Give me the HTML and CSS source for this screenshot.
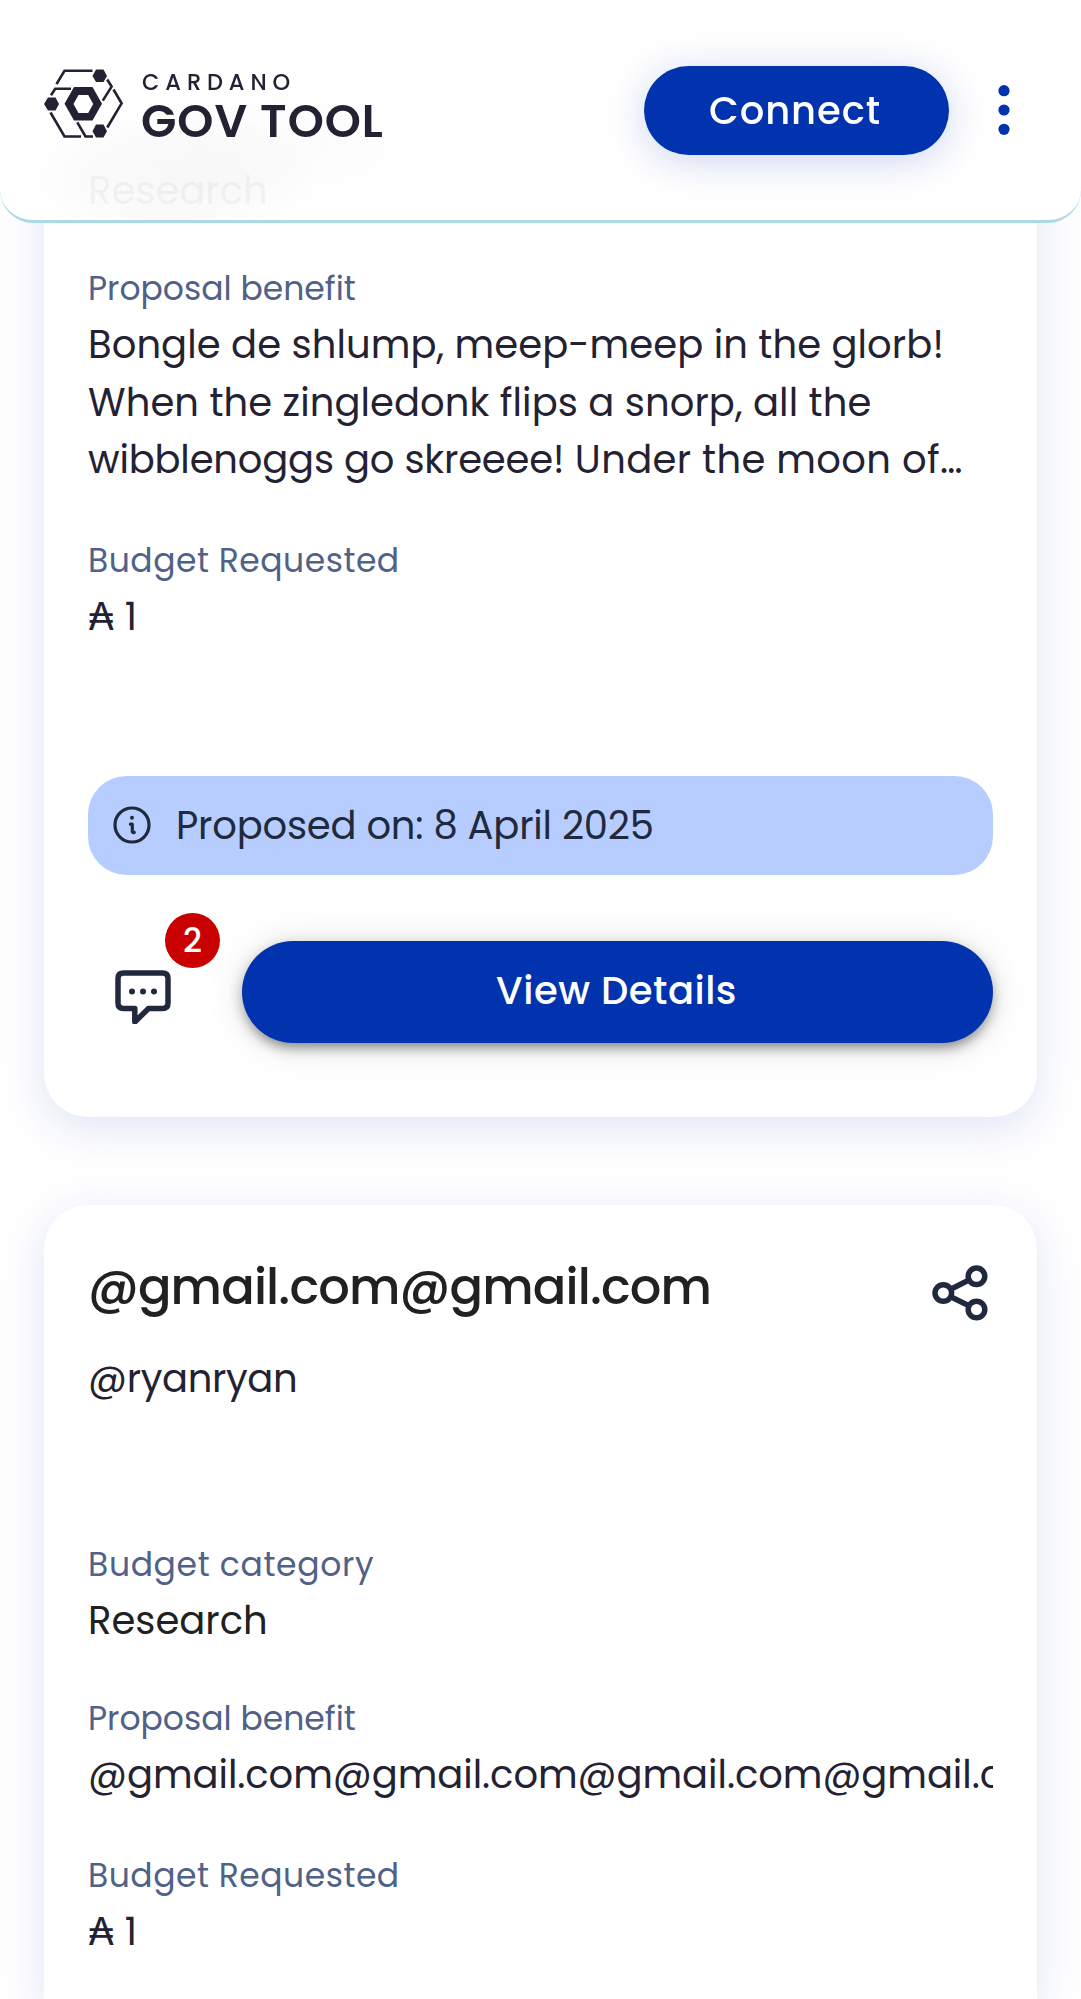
FILE: index.html
```html
<!DOCTYPE html>
<html lang="en">
<head>
<meta charset="utf-8">
<meta name="viewport" content="width=device-width, initial-scale=1">
<title>Cardano GovTool</title>
<link rel="stylesheet" href="styles.css">
</head>
<body>
<header class="topbar">
  <div class="brand">
    <svg class="brand-mark" viewBox="0 0 80 70" aria-hidden="true">
      <g fill="none" stroke="currentColor" stroke-width="2.6">
        <path d="M12.500 15.200 20.500 1.800H48.500"/>
        <path d="M63.200 10.500 67.600 17.600 58.800 31.600"/>
        <path d="M69.500 20.500 77.600 34.300 63.300 58.500"/>
        <path d="M7 26.300 11.200 19.800H27"/>
        <path d="M6.500 43.500 20.500 67.500H37"/>
        <path d="M33.300 53.300 41.500 67.500H49"/>
      </g>
      <g fill="currentColor">
        <path d="M52 .5H59.500L63 7 59.500 13H52L48.500 7Z"/>
        <path d="M52 55.500H59.500L63 62.200 59.500 68.500H52L48.500 62.200Z"/>
        <path d="M4 28.500H11.500L15 35 11.500 41.500H4L0 35Z"/>
        <path fill-rule="evenodd" d="M30 18H48.500L58 34.700 48.500 51.500H30L20.500 34.700ZM34.500 26 29.500 35 34.500 44H44.200L49.200 35 44.200 26Z"/>
      </g>
    </svg>
    <div class="brand-text">
      <span class="brand-top">CARDANO</span>
      <span class="brand-name">GOV TOOL</span>
    </div>
  </div>
  <div class="topbar-actions">
    <button class="connect">Connect</button>
    <svg class="menu-dots" viewBox="0 0 12 50" aria-hidden="true"><circle cx="6" cy="5.700" r="5.600"/><circle cx="6" cy="25" r="5.600"/><circle cx="6" cy="44.300" r="5.600"/></svg>
  </div>
</header>

<main class="proposals">
  <article class="card card-scrolled">
    <div class="field">
      <p class="value dark">Research</p>
    </div>
    <div class="field">
      <h3 class="label">Proposal benefit</h3>
      <p class="value benefit">Bongle de shlump, meep-meep in the glorb!<br>When the zingledonk flips a snorp, all the<br><span class="tight">wibblenoggs go skreeee!</span><span class="loose"> Under the moon of…</span></p>
    </div>
    <div class="field requested">
      <h3 class="label budget">Budget Requested</h3>
      <p class="value">₳ 1</p>
    </div>
    <div class="notice">
      <svg class="info" viewBox="0 0 38 38" aria-hidden="true"><circle cx="19" cy="19" r="17" fill="none" stroke="currentColor" stroke-width="3.200"/><circle cx="19" cy="11.800" r="2" fill="currentColor"/><path d="M17.400 18.200H19.300V25.800Q19.500 27 21.300 26.400" fill="none" stroke="currentColor" stroke-width="3.200" stroke-linecap="round" stroke-linejoin="round"/></svg>
      <span>Proposed on: 8 April 2025</span>
    </div>
    <div class="actions">
      <div class="comments">
        <svg class="chat" viewBox="0 0 56 54" aria-hidden="true"><path d="M8.500 3H47.500Q53 3 53 8.500V33Q53 38.500 47.500 38.500H33.500L19.800 52V38.500H8.500Q3 38.500 3 33V8.500Q3 3 8.500 3Z" fill="none" stroke="currentColor" stroke-width="5.500" stroke-linejoin="round"/><g fill="currentColor"><circle cx="17" cy="21.500" r="3"/><circle cx="28" cy="21.500" r="3"/><circle cx="39" cy="21.500" r="3"/></g></svg>
        <span class="badge">2</span>
      </div>
      <button class="details">View Details</button>
    </div>
  </article>

  <article class="card card-next">
    <div class="card-head">
      <h2 class="title">@gmail.com@gmail.com</h2>
      <svg class="share" viewBox="0 0 56 56" aria-hidden="true"><g fill="none" stroke="currentColor" stroke-width="5.500"><circle cx="11.300" cy="28" r="8.300"/><circle cx="44.500" cy="11.300" r="8.300"/><circle cx="44.500" cy="44.500" r="8.300"/><path d="M18.700 24.200 37 15M18.700 31.700 37 40.800"/></g></svg>
    </div>
    <p class="value author">@ryanryan</p>
    <div class="field">
      <h3 class="label category">Budget category</h3>
      <p class="value dark">Research</p>
    </div>
    <div class="field">
      <h3 class="label">Proposal benefit</h3>
      <p class="value clip">@gmail.com@gmail.com@gmail.com@gmail.com@gmail.com</p>
    </div>
    <div class="field requested">
      <h3 class="label budget">Budget Requested</h3>
      <p class="value">₳ 1</p>
    </div>
  </article>
</main>
</body>
</html>
```
FILE: styles.css
```css
* { box-sizing: border-box; }

body {
  margin: 0;
  height: 1999px;
  overflow: hidden;
  background: #fefeff;
  color: #242232;
  font-family: Poppins, Inter, sans-serif;
  font-size: 38.5px;
  line-height: 57.75px;
}

h2, h3, p { margin: 0; font-weight: 400; }

button {
  border: 0;
  background: #0033ad;
  color: #fff;
  font: inherit;
  font-weight: 500;
}

/* Top bar */
.topbar {
  position: fixed;
  top: 0;
  left: 0;
  right: 0;
  z-index: 10;
  height: 223px;
  padding: 0 71px 3px 44px;
  display: flex;
  align-items: center;
  justify-content: space-between;
  border-bottom: 3px solid #add8e6;
  border-radius: 0 0 33px 33px;
  background:
    radial-gradient(ellipse 150px 70px at 170px 178px, rgba(0, 0, 0, .028), rgba(0, 0, 0, .018) 50%, transparent),
    radial-gradient(ellipse 170px 70px at 280px 145px, rgba(20, 20, 60, .015), transparent),
    rgba(255, 255, 255, .957);
}

.brand { display: flex; gap: 18px; margin-top: -2px; }
.brand-mark { width: 80px; height: 70px; color: #242232; }
.brand-text { display: flex; flex-direction: column; width: 250px; }
.brand-top {
  font-size: 22.5px;
  font-weight: 500;
  line-height: 27px;
  letter-spacing: 5.9px;
}
.brand-name {
  font-size: 46px;
  font-weight: 600;
  line-height: 51px;
  letter-spacing: 1px;
  margin: 0 0 0 -1px;
}

.topbar-actions { display: flex; align-items: center; gap: 49.5px; margin-top: 3px; }
.connect {
  width: 305px;
  height: 89px;
  padding: 1px 2px 0 0;
  border-radius: 45px;
  letter-spacing: .9px;
  box-shadow: 0 6px 42px rgba(0, 51, 173, .2);
}
.menu-dots { width: 12px; height: 50px; fill: #0033ad; }

/* Cards */
.proposals { padding: 0 44px; display: flex; flex-direction: column; gap: 88px; }
.card {
  padding: 45px 44px 44px;
  border-radius: 44px;
  background: #fff;
  box-shadow: 0 11px 41px rgba(0, 51, 173, .12);
}
.card-scrolled {
  height: 1117px;
  padding-top: 161.5px;
  border-radius: 0 0 44px 44px;
}
.card-next {
  height: 794px;
  border-radius: 44px 44px 0 0;
}

.field + .field { margin-top: 44.5px; }
.field + .requested { margin-top: 47px; }
.label {
  color: #506288;
  font-size: 33px;
  line-height: 49.5px;
  margin-bottom: 2.5px;
}
.value { white-space: nowrap; }
.dark { color: #212121; }
.budget { letter-spacing: .5px; }
.category { letter-spacing: .65px; }
.benefit { letter-spacing: .08px; }
.tight { letter-spacing: -.18px; }
.loose { letter-spacing: .35px; }
.clip { overflow: hidden; letter-spacing: -.06px; }

.notice {
  height: 99px;
  margin-top: 130.5px;
  padding: 0 25px;
  display: flex;
  align-items: center;
  gap: 25px;
  border-radius: 38.5px;
  background: #b7cdff;
  color: #212a3d;
  letter-spacing: -.2px;
}
.info { width: 38px; height: 38px; margin-top: -1px; }

.actions { margin-top: 66px; display: flex; justify-content: space-between; }
.comments {
  position: relative;
  width: 110px;
  height: 102px;
  padding: 29px 27px 0;
  color: #212a3d;
}
.chat { display: block; width: 56px; height: 54px; }
.badge {
  position: absolute;
  top: -28px;
  left: 77px;
  width: 55px;
  height: 55px;
  border-radius: 50%;
  background: #c80000;
  color: #fff;
  font-size: 33px;
  font-weight: 500;
  line-height: 55px;
  text-align: center;
}
.details {
  width: 751px;
  height: 102px;
  padding: 0 2px 2px 0;
  border-radius: 51px;
  letter-spacing: .5px;
  box-shadow:
    0 8px 11px -5px rgba(0, 0, 0, .25),
    0 5px 14px rgba(0, 0, 0, .25),
    0 3px 38px rgba(0, 0, 0, .12);
}

.card-head { display: flex; justify-content: space-between; }
.title {
  color: #212121;
  font-size: 49.5px;
  font-weight: 500;
  line-height: 74.25px;
  letter-spacing: -.85px;
}
.share { width: 56px; height: 56px; margin: 15px 5px 0 0; color: #212a3d; }
.author { margin: 25.5px 0 132.5px; letter-spacing: -.35px; }
```
